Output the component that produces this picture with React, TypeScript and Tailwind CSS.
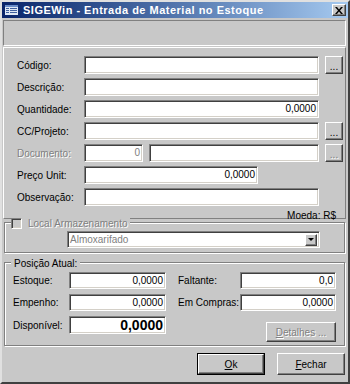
import React from "react";

const sunken =
  "bg-white border border-t-[#808080] border-l-[#808080] border-b-white border-r-white shadow-[inset_1px_1px_0_#404040,inset_-1px_-1px_0_#d4d0c8]";
const raised =
  "bg-[#c8c8c8] border border-t-white border-l-white border-b-[#404040] border-r-[#404040] shadow-[inset_-1px_-1px_0_#808080]";
const etched =
  "border border-[#808080] shadow-[1px_1px_0_#fff,inset_1px_1px_0_#fff]";
const dis = "text-[#808080] [text-shadow:1px_1px_0_#fff]";

function Input({ className, value, disabled, bold }: { className: string; value?: string; disabled?: boolean; bold?: boolean }) {
  return (
    <div
      className={`${sunken} ${className} flex items-center justify-end pr-[2px] leading-none ${disabled ? "text-[#808080]" : "text-black"} ${bold ? "font-bold text-[14px]" : ""}`}
    >
      {value}
    </div>
  );
}

function Dots({ disabled }: { disabled?: boolean }) {
  return (
    <div className={`${raised} w-[18px] h-[18px] ml-[6px] flex items-end justify-center pb-[1px] leading-none ${disabled ? dis : "text-black"}`}>
      ...
    </div>
  );
}

function Row({ label, disabled, children }: { label: string; disabled?: boolean; children: React.ReactNode }) {
  return (
    <div className="flex items-center h-[18px]">
      <div className={`w-[67px] ${disabled ? dis : "text-black"}`}>{label}</div>
      {children}
    </div>
  );
}

export default function App() {
  return (
    <div className="w-[350px] h-[384px] bg-[#c8c8c8] border-2 border-t-[#e0e0e0] border-l-[#e0e0e0] border-b-[#404040] border-r-[#404040] flex flex-col font-['Liberation_Sans',Arial,sans-serif] text-[10px] overflow-hidden">
      {/* title */}
      <div className="h-[16px] flex items-center bg-gradient-to-r from-[#0a246a] to-[#a6caf0] pl-[3px] pr-[2px]">
        <svg width="13" height="10" viewBox="0 0 13 10" className="shrink-0">
          <rect x="0" y="0" width="13" height="10" fill="#dfe8f5" />
          <rect x="0" y="0" width="13" height="2" fill="#6a8cc8" />
          <rect x="1" y="3" width="3" height="1" fill="#4060a0" />
          <rect x="5" y="3" width="7" height="1" fill="#4060a0" />
          <rect x="1" y="5" width="3" height="1" fill="#4060a0" />
          <rect x="5" y="5" width="7" height="1" fill="#4060a0" />
          <rect x="1" y="7" width="3" height="1" fill="#4060a0" />
          <rect x="5" y="7" width="7" height="1" fill="#4060a0" />
        </svg>
        <span className="ml-[5px] text-white font-bold text-[11px] tracking-[0.5px]">SIGEWin - Entrada de Material no Estoque</span>
        <div className={`${raised} ml-auto w-[14px] h-[12px] flex items-center justify-center`}>
          <svg width="8" height="7" viewBox="0 0 8 7">
            <path d="M0 0h2l2 2.5L6 0h2L5 3.5 8 7H6L4 4.5 2 7H0l3-3.5z" fill="#000" />
          </svg>
        </div>
      </div>

      {/* toolbar */}
      <div className="mt-[2px] ml-[1px] mr-[2px] h-[26px] border border-t-[#808080] border-l-[#808080] border-b-white border-r-white" />

      {/* main panel */}
      <div className="mt-[1px] ml-[1px] mr-[2px] h-[172px] border border-t-white border-l-white border-b-[#808080] border-r-[#808080] pl-[13px] pt-[8px] flex flex-col gap-[4px]">
        <Row label="Código:">
          <Input className="w-[235px] h-[18px]" />
          <Dots />
        </Row>
        <Row label="Descrição:">
          <Input className="w-[235px] h-[18px]" />
        </Row>
        <Row label="Quantidade:">
          <Input className="w-[235px] h-[18px]" value="0,0000" />
        </Row>
        <Row label="CC/Projeto:">
          <Input className="w-[235px] h-[18px]" />
          <Dots />
        </Row>
        <Row label="Documento:" disabled>
          <Input className="w-[59px] h-[18px]" value="0" disabled />
          <Input className="ml-[6px] w-[170px] h-[18px]" disabled />
          <Dots disabled />
        </Row>
        <Row label="Preço Unit:">
          <Input className="w-[174px] h-[18px]" value="0,0000" />
        </Row>
        <Row label="Observação:">
          <Input className="w-[235px] h-[18px]" />
        </Row>
        <div className="flex justify-end pr-[9px] h-[12px] leading-[12px] text-black">Moeda: R$</div>
      </div>

      {/* local armazenamento */}
      <div className={`relative mt-[3px] ml-[2px] mr-[3px] h-[31px] ${etched} pl-[62px] pt-[8px]`}>
        <div className="absolute left-[6px] top-[-7px] flex items-center bg-[#c8c8c8] pr-[2px]">
          <div className={`${sunken} !bg-[#c8c8c8] w-[11px] h-[11px]`} />
          <span className={`ml-[6px] ${dis}`}>Local Armazenamento</span>
        </div>
        <div className={`${sunken} w-[253px] h-[17px] flex items-center pl-[2px] pr-[2px]`}>
          <span className={dis}>Almoxarifado</span>
          <div className={`${raised} ml-auto w-[12px] h-[12px] flex items-center justify-center`}>
            <svg width="6" height="4" viewBox="0 0 6 4">
              <path d="M0 0h6L3 3z" fill="#000" />
            </svg>
          </div>
        </div>
      </div>

      {/* posição atual */}
      <div className={`relative mt-[9px] ml-[2px] mr-[3px] h-[84px] ${etched} pl-[8px] pt-[9px] flex`}>
        <div className="absolute left-[6px] top-[-7px] bg-[#c8c8c8] px-[3px] text-black">Posição Atual:</div>
        <div className="flex flex-col gap-[5px]">
          <div className="flex items-center h-[17px]">
            <div className="w-[56px]">Estoque:</div>
            <Input className="w-[97px] h-[17px]" value="0,0000" />
          </div>
          <div className="flex items-center h-[17px]">
            <div className="w-[56px]">Empenho:</div>
            <Input className="w-[97px] h-[17px]" value="0,0000" />
          </div>
          <div className="flex items-center h-[18px]">
            <div className="w-[56px]">Disponível:</div>
            <Input className="w-[97px] h-[18px]" value="0,0000" bold />
          </div>
        </div>
        <div className="ml-[12px] flex flex-col gap-[5px]">
          <div className="flex items-center h-[17px]">
            <div className="w-[62px]">Faltante:</div>
            <Input className="w-[96px] h-[17px]" value="0,0" />
          </div>
          <div className="flex items-center h-[17px]">
            <div className="w-[62px]">Em Compras:</div>
            <Input className="w-[96px] h-[17px]" value="0,0000" />
          </div>
          <div className="flex justify-end mt-[6px]">
            <div className={`${raised} w-[70px] h-[20px] flex items-center justify-center ${dis}`}>
              <span><span className="underline">D</span>etalhes ...</span>
            </div>
          </div>
        </div>
      </div>

      {/* buttons */}
      <div className="mt-[7px] flex justify-end gap-[12px] pr-[3px]">
        <div className="w-[68px] h-[22px] border border-black">
          <div className={`${raised} w-full h-full flex items-center justify-center text-black`}>
            <span><span className="underline">O</span>k</span>
          </div>
        </div>
        <div className={`${raised} w-[68px] h-[22px] flex items-center justify-center text-black`}>
          <span><span className="underline">F</span>echar</span>
        </div>
      </div>
    </div>
  );
}
